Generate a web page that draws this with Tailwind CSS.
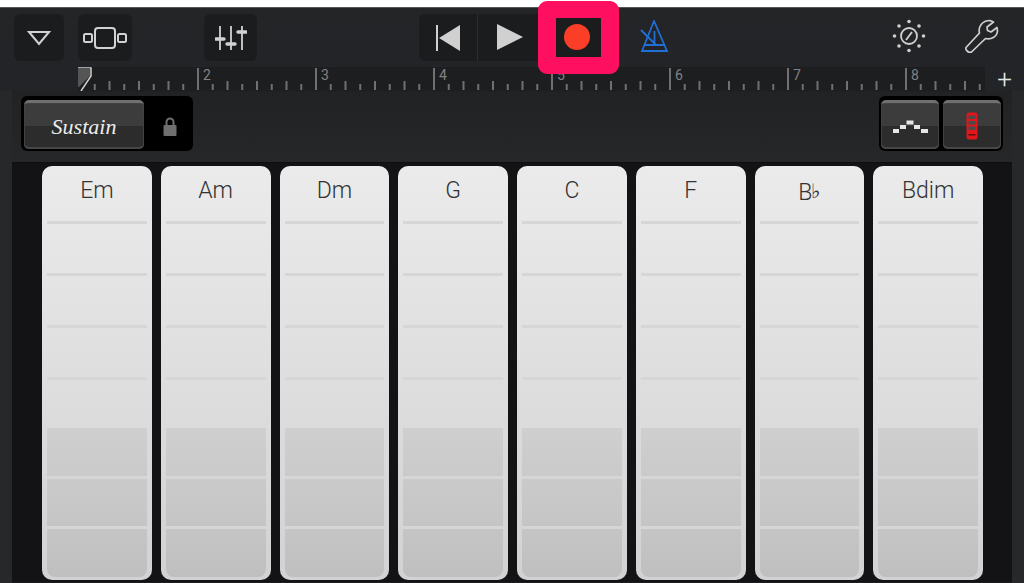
<!DOCTYPE html>
<html lang="en">
<head>
    <meta charset="UTF-8">
    <title>Smart Keyboard</title>
    <script src="https://cdn.jsdelivr.net/npm/@tailwindcss/browser@4"></script>
</head>
<body class="bg-white">
    <div class="relative w-[1024px] h-[583px] overflow-hidden flex flex-col bg-[#27282a] font-['Roboto',sans-serif]">
        <div class="h-[7px] bg-white shrink-0"></div>

        <!-- toolbar -->
        <div class="h-[60px] shrink-0 flex items-start pt-[6px] pl-[14px] border-t border-[#55565a] bg-gradient-to-b from-[#242527] to-[#222427]">
            <button class="w-[50px] h-[47px] rounded-md bg-[#1b1c1e] flex items-center justify-center">
                <svg width="24" height="16" viewBox="0 0 24 16" fill="none" stroke="#d2d2d2" stroke-width="2"><path d="M2 2h20L12 14z"/></svg>
            </button>
            <button class="ml-[14px] w-[54px] h-[47px] rounded-md bg-[#1b1c1e] flex items-center justify-center">
                <svg width="44" height="22" viewBox="0 0 44 22" fill="none" stroke="#d2d2d2" stroke-width="2"><rect x="1" y="7" width="8" height="8" rx="1.5"/><rect x="12" y="1" width="20" height="20" rx="3"/><rect x="35" y="7" width="8" height="8" rx="1.5"/></svg>
            </button>
            <button class="ml-[72px] w-[53px] h-[47px] rounded-md bg-[#1b1c1e] flex items-center justify-center">
                <svg width="32" height="24" viewBox="0 0 32 24" fill="none" stroke="#d2d2d2" stroke-width="1.8"><path d="M5 0v24M16 0v24M27 0v24"/><path d="M1 13h8M12 18h8M23 6h8" stroke-width="3.4" stroke-linecap="round"/></svg>
            </button>
            <div class="ml-[162px] flex h-[47px] w-[182px] rounded-md bg-[#1b1c1e]">
                <div class="w-[59px] border-r border-[#2b2c2f] flex items-center justify-center">
                    <svg width="24" height="26" viewBox="0 0 24 26" fill="#d0d0d0"><rect x="0" y="0" width="2" height="26"/><path d="M24 0v26L3 13z"/></svg>
                </div>
                <div class="w-[61px] pl-[2px] pb-[2px] flex items-center justify-center">
                    <svg width="26" height="26" viewBox="0 0 26 26" fill="#d0d0d0"><path d="M0 0v26l26-13z"/></svg>
                </div>
                <div class="ml-[17px] w-[45px] h-[39px] mt-[4px] pr-[3px] pb-[1px] flex items-center justify-center">
                    <div class="w-[26px] h-[26px] rounded-full bg-[#fa3e28]"></div>
                </div>
            </div>
            <div class="ml-[39px] mt-[6px]">
                <svg width="30" height="32" viewBox="0 0 30 32" fill="none" stroke="#1f6fd6" stroke-width="1.8"><path d="M14 1 2 31h25z"/><path d="M5 25h20M14.500 11v12M1 10l15 15"/></svg>
            </div>
            <div class="ml-[222px] mt-[5px]">
                <svg width="34" height="34" viewBox="0 0 34 34" fill="none" stroke="#cfcfcf" stroke-width="1.8"><circle cx="17" cy="17" r="8"/><path d="M14 21l6-8"/><g fill="#cfcfcf" stroke="none"><circle cx="17" cy="2.500" r="1.800"/><circle cx="17" cy="31.500" r="1.800"/><circle cx="2.500" cy="17" r="1.800"/><circle cx="31.500" cy="17" r="1.800"/><circle cx="7" cy="7" r="1.800"/><circle cx="27" cy="7" r="1.800"/><circle cx="7" cy="27" r="1.800"/><circle cx="27" cy="27" r="1.800"/></g></svg>
            </div>
            <div class="ml-[39px] mt-[5px]">
                <svg width="34" height="34" viewBox="0 0 34 34" fill="none" stroke="#cfcfcf" stroke-width="1.700" stroke-linejoin="round"><path d="M1 28.500 14.500 14C13 8 17 1.500 25 1.500L28.500 3 22 8l.5 3.500L26 13l6-4.500.5 3.500C32 18 26 21 20.500 19.500L6.500 33C4 34.500 0 31 1 28.500z"/></svg>
            </div>
        </div>

        <!-- ruler -->
        <div class="h-[24px] shrink-0 flex bg-[#232427]">
            <div id="ruler" class="relative ml-[78px] w-[907px] h-full bg-[#1d1e20]"></div>
            <div class="flex-1 flex items-center justify-center text-[26px] font-light leading-none text-[#e4e4e4]">+</div>
        </div>

        <div class="flex-1 flex flex-col mx-[12px] border-b border-[#1b1c1e] min-h-0">
            <!-- controls strip -->
            <div class="h-[71px] shrink-0 flex justify-between px-[9px] pt-[5px] bg-gradient-to-b from-[#212224] to-[#262729]">
                <div class="w-[172px] h-[55px] rounded-md bg-black flex items-start pt-[4px] pl-[3px]">
                    <button class="w-[120px] h-[49px] rounded-[5px] border-t-[3px] border-[#707070] bg-gradient-to-b from-[#3c3c3d] from-50% to-[#2c2c2d] to-50% shadow-[inset_0_-2px_0_#474748,inset_0_0_0_1px_#414142] text-[22px] italic text-[#ececec] font-['Liberation_Serif',serif]">Sustain</button>
                    <svg class="ml-[19px] mt-[17px]" width="14" height="19" viewBox="0 0 14 19"><path d="M3.500 8V5a3.500 3.500 0 0 1 7 0v3" fill="none" stroke="#6f6f6f" stroke-width="2"/><rect x="0.500" y="8" width="13" height="11" rx="1" fill="#6f6f6f"/></svg>
                </div>
                <div class="w-[124px] h-[55px] rounded-md bg-black flex items-start justify-between pt-[4px] px-[2px]">
                    <button class="w-[58px] h-[49px] rounded-[5px] border-t-[3px] border-[#707070] bg-gradient-to-b from-[#3c3c3d] from-50% to-[#2c2c2d] to-50% shadow-[inset_0_-2px_0_#474748,inset_0_0_0_1px_#414142] flex items-center justify-center">
                        <svg width="35" height="13" viewBox="0 0 35 13" fill="#e6e6e6"><rect x="0" y="9" width="6" height="4"/><rect x="7" y="5" width="6" height="4"/><rect x="13.500" y="0.500" width="7" height="4"/><rect x="21" y="5" width="6" height="4"/><rect x="28" y="9" width="7" height="4"/></svg>
                    </button>
                    <button class="w-[58px] h-[49px] rounded-[5px] border-t-[3px] border-[#707070] bg-gradient-to-b from-[#3c3c3d] from-50% to-[#2c2c2d] to-50% shadow-[inset_0_-2px_0_#474748,inset_0_0_0_1px_#414142] flex items-center justify-center">
                        <svg width="12" height="28" viewBox="0 0 12 28"><rect x="0.500" y="0.500" width="11" height="27" rx="2.500" fill="#e0161b"/><rect x="2.500" y="3.500" width="7" height="3.500" fill="#4a4a4a"/><rect x="2.500" y="9" width="7" height="3.500" fill="#4a4a4a"/><rect x="2.500" y="14.500" width="7" height="3.500" fill="#4a4a4a"/><rect x="2.500" y="22" width="7" height="1.500" fill="#5a1012"/></svg>
                    </button>
                </div>
            </div>

            <!-- chord strips -->
            <div id="chords" class="flex-1 grid grid-cols-8 gap-[9px] pl-[30px] pr-[29px] pt-[3px] bg-[#131315] border-t border-[#0e0e10]"></div>
        </div>

        <!-- record highlight -->
        <div class="absolute left-[538px] top-[1px] w-[81px] h-[73px] rounded-[9px] border-y-[17px] border-x-[18px] border-[#fe0f5f]"></div>
    </div>

    <script>
        // ruler bars, 118px each, bar 1 starts under the playhead
        const ruler = document.getElementById('ruler');
        let ticks = '<path d="M0 1h13v8L3 24" fill="none" stroke="#d0d0d0" stroke-width="1.500"/><path d="M0 1h12v8L1 20H0z" fill="#555"/>';
        for (let bar = 0; bar < 8; bar++) {
            const x = 1 + bar * 118;
            if (bar > 0) ticks += `<rect x="${x}" y="1" width="2" height="22" fill="#707072"/>`;
            for (let t = 1; t < 8; t++) {
                const h = t % 2 ? 6 : 9;
                ticks += `<rect x="${x + t * 14.75}" y="${23 - h}" width="2" height="${h}" fill="#707072"/>`;
            }
        }
        ruler.innerHTML = `<svg class="absolute inset-0" width="907" height="24" viewBox="0 0 907 24">${ticks}</svg>`;
        for (let n = 2; n <= 8; n++) {
            const label = document.createElement('span');
            label.textContent = n;
            label.className = 'absolute top-0 text-[14px] leading-[16px] text-[#828284]';
            label.style.left = (1 + (n - 1) * 118 + 6) + 'px';
            ruler.appendChild(label);
        }

        // chord strips
        const chords = ['Em', 'Am', 'Dm', 'G', 'C', 'F', 'B<span class="font-[\'DejaVu_Sans\'] text-[20px] align-[2px] -ml-[1px]">♭</span>', 'Bdim'];
        const upper = '<div class="h-[3px] mx-[5px] bg-[#d6d6d6]"></div>';
        const lower = '<div class="h-[3px] bg-[#d6d6d6]"></div>';
        document.getElementById('chords').innerHTML = chords.map(name => `
            <div class="h-[414px] rounded-[10px] flex flex-col bg-gradient-to-b from-[#ebebeb] to-[#d2d2d2] overflow-hidden">
                <div class="h-[55px] pt-[10px] text-center text-[23px] font-light leading-[30px] text-[#333333]">${name}</div>
                ${upper}<div class="h-[49px]"></div>
                ${upper}<div class="h-[49px]"></div>
                ${upper}<div class="h-[49px]"></div>
                ${upper}<div class="h-[48px]"></div>
                <div class="flex-1 mx-[5px] flex flex-col overflow-hidden rounded-b-[8px] mb-[3px]">
                    <div class="h-[48px] bg-gradient-to-b from-[#cfcfcf] to-[#cacaca]"></div>${lower}
                    <div class="h-[47px] bg-gradient-to-b from-[#cacaca] to-[#c5c5c5]"></div>${lower}
                    <div class="flex-1 bg-gradient-to-b from-[#c5c5c5] to-[#bfbfbf]"></div>
                </div>
            </div>`).join('');
    </script>
</body>
</html>
